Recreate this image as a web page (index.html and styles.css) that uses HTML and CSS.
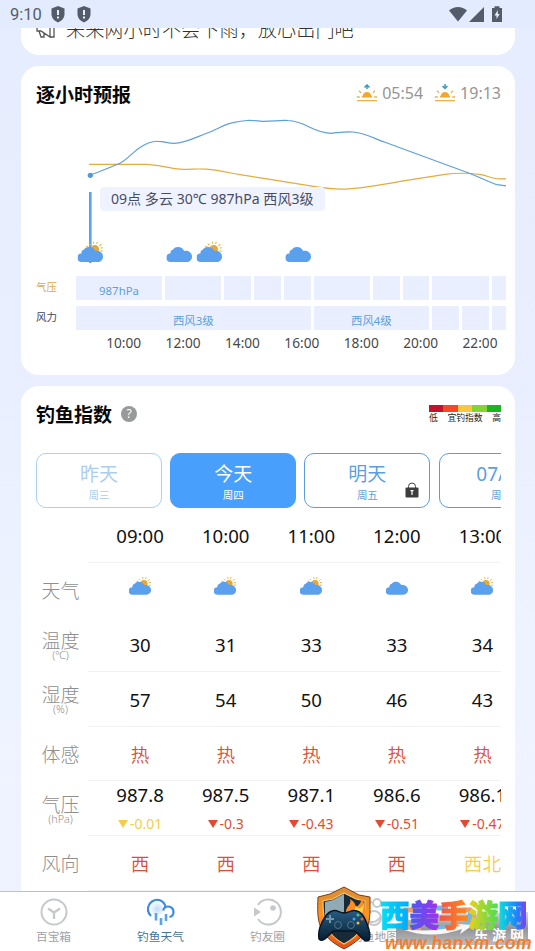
FILE: index.html
```html
<!DOCTYPE html>
<html lang="zh-CN">
<head>
<meta charset="utf-8">
<title>钓鱼天气</title>
<link rel="stylesheet" href="styles.css">
</head>
<body>
<svg class="defs" aria-hidden="true">
  <defs>
    <symbol id="cloud" viewBox="0 0 26 22"><path fill="#5ba0ec" d="M4 20.5a4.3 4.3 0 0 1-.2-8.6C4.200 9.200 4.700 8.500 6.300 8.200 7.800 5.900 9.700 5.400 11.700 5.500c2.700 0 4.800 1.600 5.900 3.900 4-.8 7.900 1.600 7.900 5.800 0 3.200-2.500 5.300-5.300 5.300z"/></symbol>
    <symbol id="partly" viewBox="0 0 26 22"><circle cx="17.300" cy="7.700" r="4.200" fill="#e7a733"/><path stroke="#eeb544" stroke-width="1.100" stroke-linecap="round" d="M16.200 1.800 15.800.3M19.200 1.900l.6-1.400M22.300 4l1.300-1M23.500 6.500l1.600-.2M23.500 9.400l1.500.3M12.600 3.500l-1-1M10.500 5.200 9 4.800"/><use href="#cloud"/></symbol>
    <symbol id="sun" viewBox="0 0 22 17"><path fill="#f4a62c" d="M6 12.500c-.5-1 .5-1.500 1-2.500a4.200 4.200 0 0 1 8 0c.5 1 1.500 1.500 1 2.500z"/><path fill="none" stroke="#efb04a" stroke-width="1.300" d="M1 15.700h20M.8 12h3M18.200 12h3M3 5.700l2 2M19 5.700l-2 2"/></symbol>
    <symbol id="shield" viewBox="0 0 14 17"><path fill="#555c69" d="m7 0 6.500 2.500V8c0 4-2.800 7-6.500 8.500C3.300 15 .5 12 .5 8V2.500z"/><path stroke="#e5edfe" stroke-width="2" d="M7 4v5M7 10.500v2"/></symbol>
  </defs>
</svg>
<div class="phone">
  <header class="status">
    <span class="clock">9:10</span>
    <svg class="shield" width="14" height="17"><use href="#shield"/></svg>
    <svg class="shield second" width="14" height="17"><use href="#shield"/></svg>
    <svg class="signals" width="54" height="17" viewBox="0 0 54 17"><g fill="#555c69"><path d="M0 4.500C5-.2 13-.2 18 4.500L9 15.500z"/><path d="M35 1v15H20z"/><path d="M43 2h2.500V.3h5V2H53v14H43z"/></g><path fill="#e5edfe" d="m48.800 4-3.300 5.500h2V13l3.200-5h-1.900z"/></svg>
  </header>

  <main class="feed">
    <section class="card notice">
      <div class="notice-line">
        <svg width="19" height="22" viewBox="0 0 19 22"><path fill="none" stroke="#555" stroke-width="1.300" d="M1 6v7h4l9 6V1L5 6zM3 13l2 6h3v-4M18 3v16h-4"/></svg>
        <span>未来两小时不会下雨，放心出门吧</span>
      </div>
    </section>

    <section class="card hourly">
      <div class="card-head">
        <h2>逐小时预报</h2>
        <div class="suntimes">
          <svg width="22" height="18" viewBox="0 0 22 18"><use href="#sun" width="22" height="17" y="1"/><path fill="none" stroke="#3d98c2" stroke-width="1.500" d="M11 5V1M8.500 3.500 11 1l2.500 2.500"/></svg>
          <span>05:54</span>
          <svg class="set" width="22" height="18" viewBox="0 0 22 18"><use href="#sun" width="22" height="17" y="1"/><path fill="none" stroke="#3d98c2" stroke-width="1.500" d="M11 0v4M8.500 2 11 4.500 13.500 2"/></svg>
          <span>19:13</span>
        </div>
      </div>
      <div class="chart">
        <svg width="430" height="155" viewBox="76 112 430 155">
          <path class="line pressure" d="M89 164.300H146C160 164.500 168 169 184 169.300C192 169.300 198 168.600 206 169.200C220 170.200 230 173 240 174.700L270 179.300L315 186.700C326 188.500 334 189.200 342 189.200C362 188.800 382 184.500 405 180.700L445 174.300C458 172.600 468 172.800 481 174.700C488 176 493 178.800 499 178.800H506.500"/>
          <path class="line temp" d="M90 175.300C98 172 112 167 120 163.300C128 159 134 151 140 147.500C147 143 153 141 158 141.300C165 141.500 168 143.500 174 143.400C186 143 196 137 206.700 133.300C216 130 225 124 233 122.700C244 120 250 120 262 121.300C272 121.500 280 120 288 120.500C306 121 312 133 331.700 133.300C340 132.500 345 131.500 353 132C366 133 375 139 385 142.300L468 172.700C480 177 490 183 497 184.700L506.500 186"/>
          <circle cx="90.300" cy="175.300" r="2.600" fill="#4f98e0"/>
          <path stroke="#5ba0ec" stroke-width="2.600" d="M90.300 192v71"/>
          <use href="#partly" x="77.500" y="241.500" width="26" height="22"/>
          <use href="#cloud" x="166.500" y="241.500" width="26" height="22"/>
          <use href="#partly" x="196.500" y="241.500" width="26" height="22"/>
          <use href="#cloud" x="285.500" y="241.500" width="26" height="22"/>
        </svg>
        <div class="tip">09点 多云 30℃ 987hPa 西风3级</div>
      </div>
      <div class="track press"><span class="name">气压</span>
        <div class="cells"><i class="s3">987hPa</i><i class="s2"></i><i></i><i></i><i></i><i class="s2"></i><i></i><i></i><i class="s2"></i><i></i></div>
      </div>
      <div class="track"><span class="name">风力</span>
        <div class="cells"><i class="s8">西风3级</i><i class="s4">西风4级</i><i></i><i></i><i></i></div>
      </div>
      <div class="hours"><span>10:00</span><span>12:00</span><span>14:00</span><span>16:00</span><span>18:00</span><span>20:00</span><span>22:00</span></div>
    </section>

    <section class="card index">
      <div class="card-head">
        <h2>钓鱼指数</h2><span class="help">?</span>
        <div class="legend">
          <div class="scale"><b class="r"></b><b class="o"></b><b class="y"></b><b class="l"></b><b class="g"></b></div>
          <div class="words"><span>低</span><span>宜钓指数</span><span>高</span></div>
        </div>
      </div>
      <div class="days">
        <div class="day past"><span>昨天</span><small>周三</small></div>
        <div class="day active"><span>今天</span><small>周四</small></div>
        <div class="day"><span>明天</span><small>周五</small>
          <svg class="lock" width="14" height="16" viewBox="0 0 14 16"><path fill="none" stroke="#444" d="M3.500 6V4.500a3.500 3.500 0 0 1 7 0V6"/><rect x=".5" y="5.500" width="13" height="10" rx="1" fill="#3d3d3d"/><path stroke="#fff" stroke-width="1.200" d="M7 8v5M5.500 8.700h3"/></svg>
        </div>
        <div class="day"><span>07/11</span><small>周六</small></div>
      </div>
      <div class="table">
        <div class="labels">
          <div></div><div>天气</div><div>温度<small>(℃)</small></div><div>湿度<small>(%)</small></div><div>体感</div><div>气压<small>(hPa)</small></div><div>风向</div>
        </div>
        <div class="rows">
          <div class="row"><span>09:00</span><span>10:00</span><span>11:00</span><span>12:00</span><span>13:00</span></div>
          <div class="row icons"><svg><use href="#partly"/></svg><svg><use href="#partly"/></svg><svg><use href="#partly"/></svg><svg><use href="#cloud"/></svg><svg><use href="#partly"/></svg></div>
          <div class="row"><span>30</span><span>31</span><span>33</span><span>33</span><span>34</span></div>
          <div class="row"><span>57</span><span>54</span><span>50</span><span>46</span><span>43</span></div>
          <div class="row red"><span>热</span><span>热</span><span>热</span><span>热</span><span>热</span></div>
          <div class="row hpa">
            <span>987.8<em class="yellow">-0.01</em></span><span>987.5<em>-0.3</em></span><span>987.1<em>-0.43</em></span><span>986.6<em>-0.51</em></span><span>986.1<em>-0.47</em></span>
          </div>
          <div class="row red"><span>西</span><span>西</span><span>西</span><span>西</span><span class="yellow">西北</span></div>
        </div>
      </div>
    </section>
  </main>

  <nav class="tabs">
    <div class="tab"><svg width="28" height="28" viewBox="0 0 28 28"><g fill="none" stroke="#c5c8cc" stroke-width="2"><circle cx="14" cy="14" r="12.500"/><path stroke-width="2.400" d="m8 10.500 6 4 6-4M14 14v7"/></g></svg>百宝箱</div>
    <div class="tab on"><svg width="28" height="28" viewBox="0 0 28 28"><defs><radialGradient id="glow"><stop offset="0" stop-color="#bfdbfa"/><stop offset="1" stop-color="#f6faff"/></radialGradient></defs><circle cx="10.500" cy="11" r="7" fill="url(#glow)"/><g fill="none" stroke="#3a8ddd" stroke-width="2.200"><path d="M4 18C-.5 14 0 7 5 3.500c5-3.500 12-1.500 13.500 5.500 4-1.500 8 .8 8 5 0 2.500-1.500 4.500-4 5M18.500 9c-1.300.7-2 2-2.300 3.500"/><path stroke-width="2.600" stroke="#5aa3e9" d="M9 15v7.500M14 20v7M19 16v7"/></g></svg>钓鱼天气</div>
    <div class="tab"><svg width="28" height="28" viewBox="0 0 28 28"><path fill="none" stroke="#c5c8cc" stroke-width="2" d="M4 7a12.500 12.500 0 1 1 0 14"/><path fill="#c5c8cc" d="m0 9.500 7 4.500-7 4.500z"/><circle cx="19" cy="10" r="2.800" fill="#c5c8cc"/></svg>钓友圈</div>
    <div class="tab"><svg width="28" height="28" viewBox="0 0 28 28"><g fill="none" stroke="#c5c8cc" stroke-width="2"><path d="M11 4a10 10 0 1 0 9 14"/><circle cx="16" cy="5" r="4"/><circle cx="13" cy="20" r="7"/></g></svg>钓鱼地图</div>
    <div class="tab"></div>
  </nav>

  <div class="brand">
    <svg class="plate" width="138" height="46" viewBox="0 0 138 46"><defs><linearGradient id="steel" x2="0" y2="1"><stop stop-color="#d6d6d8"/><stop offset=".5" stop-color="#929497"/><stop offset="1" stop-color="#bbbcbe"/></linearGradient></defs><path fill="url(#steel)" d="M5 24q35-12 63-10L137 12v33H5z"/><g fill="none" stroke-width="5"><path stroke="#ef9c67" d="M29 10H15v18h15M65 10h14q8 9-3 16H65"/><path stroke="#70b9e5" d="M57 8H42v20h18M81 10l-7 18"/></g><path fill="#f8f8f8" d="M11 29q28 11 60 0l-2 5 13-9-15-1 2 2Q39 33 11 29"/></svg>
    <svg class="crest" width="58" height="64" viewBox="0 0 58 64"><defs><linearGradient id="fire" x2="0" y2="1"><stop stop-color="#d58e37"/><stop offset=".45" stop-color="#ff941e"/><stop offset="1" stop-color="#e44e12"/></linearGradient><linearGradient id="pad" x2="0" y2="1"><stop stop-color="#275c82"/><stop offset="1" stop-color="#071d30"/></linearGradient></defs><path fill="url(#fire)" stroke="#793a1d" d="M29 1 44 9l11 2c0 25 2 37-26 52C2 49 2 35 3 11l12-3z"/><path fill="#172a39" stroke="#ffc16a" stroke-width="1.200" d="m29 7 12 6 9 2c0 24-2 33-21 43C10 48 8 34 8 15l10-2z"/><path fill="#91abb5" d="m29 8-11 6-8 2v18l19-8z"/><path fill="#ff8b20" d="M31 26c0-6 6-7 4-13 5 3 6 6 5 9 5-3 7-7 6-11 5 6 3 13 5 20L48 44z"/><path fill="#ffd34b" d="M36 29c4-3 3-6 5-10 2 6 5 3 8-1l-3 16z"/><path fill="url(#pad)" stroke="#091521" stroke-width="1.500" d="M17 25c5-2 7 2 12 2s8-4 13-2c8 1 15 24 12 29-5 4-10-7-15-9H19C14 47 9 58 4 53 2 43 10 27 17 25"/><path stroke="#7295a7" stroke-width="2" d="M15 29v8M11 33h8"/><g fill="none" stroke="#52758a"><circle cx="23" cy="39" r="3.500"/><circle cx="36" cy="39" r="3.500"/></g><circle cx="43" cy="29" r="1.500" fill="#61be7b"/><circle cx="39" cy="33" r="1.500" fill="#3fa6ed"/><circle cx="47" cy="33" r="1.500" fill="#ef5d44"/><circle cx="43" cy="37" r="1.500" fill="#f1bc3a"/></svg>
    <span class="brand-sub">乐游网</span>
    <span class="brand-name"><b class="c1">西</b><b class="c2">美</b><b class="c3">手</b><b class="c4">游</b><b class="c5">网</b></span>
    <span class="brand-url">www.hanxm.com</span>
  </div>
</div>
</body>
</html>
```
FILE: styles.css
```css
* { box-sizing: border-box; }
body { margin: 0; font-family: "Noto Sans", "Noto Sans CJK SC", sans-serif; color: #111; }
svg { display: block; flex: none; }
.defs { position: absolute; width: 0; height: 0; }
.phone { position: relative; width: 535px; height: 951px; overflow: hidden; display: flex; flex-direction: column; background: linear-gradient(#e4edff, #e8edfe 12%, #e9effe 40%, #eef4ff 75%, #f0f1ff); }

.status { height: 28px; flex: none; display: flex; align-items: center; padding: 1px 32px 0 10px; background: #e3ecff; }
.clock { width: 41px; font: 16.5px/20px Roboto, sans-serif; color: #555c69; }
.shield.second { margin-left: 12px; }
.signals { margin-left: auto; }

.feed { flex: 1; min-height: 0; overflow: hidden; display: flex; flex-direction: column; gap: 11px; padding: 0 20px 0 21px; }
.card { flex: none; background: #fff; border-radius: 18px; padding: 0 14px 0 15px; }
.notice { height: 27px; border-radius: 0 0 18px 18px; overflow: hidden; }
.notice-line { display: flex; align-items: center; gap: 11px; height: 28px; margin-top: -13px; font-size: 19.2px; font-weight: 300; color: #333; white-space: nowrap; }

.card-head { display: flex; align-items: center; height: 56px; }
h2 { margin: 0; font: bold 19px/28px "Noto Sans CJK SC", sans-serif; color: #080808; }
.suntimes { margin-left: auto; display: flex; align-items: center; gap: 4px; height: 28px; margin-top: -3px; color: #959595; font-size: 16px; }
.suntimes .set { margin-left: 7px; }

.hourly { height: 309px; }
.chart { position: relative; height: 155px; margin: -10px 0 0 40px; }
.line { fill: none; stroke-width: 1.2; }
.line.temp { stroke: #5d9fdc; }
.line.pressure { stroke: #e5ab3e; }
.tip { position: absolute; left: 24px; top: 75px; width: 225px; height: 24px; border-radius: 4px; padding-left: 11px; background: #eff3ff; color: #494d63; font-size: 14.08px; line-height: 24px; white-space: nowrap; }
.track { display: flex; height: 24px; margin: 0 0 6px; }
.track.press { margin-top: 9px; }
.name { flex: none; width: 40px; font-size: 10.5px; line-height: 23px; color: #3f4659; }
.press .name { color: #dfac3e; }
.cells { flex: none; display: grid; grid-template-columns: repeat(14, 26.7px) 14px; column-gap: 3px; }
.cells i { font-style: normal; background: #e9effe; color: #5ba0dd; font-size: 11.4px; line-height: 30px; height: 24px; text-align: center; }
.cells .s2 { grid-column: span 2; }
.cells .s3 { grid-column: span 3; }
.cells .s4 { grid-column: span 4; }
.cells .s8 { grid-column: span 8; }
.hours { display: grid; grid-template-columns: repeat(7, 59.4px); margin: -3px 0 0 58px; font-size: 13.7px; line-height: 20px; color: #484848; text-align: center; }

.index { height: 560px; }
.help { width: 16px; height: 16px; margin-left: 9px; border-radius: 50%; background: #999; color: #fff; font-size: 12px; line-height: 16px; text-align: center; }
.legend { width: 72px; margin-left: auto; }
.scale { display: flex; height: 7px; margin-top: 1px; }
.scale b { flex: 1; }
.scale .r { background: #c9102a; }
.scale .o { background: #f54723; }
.scale .y { background: #fac642; }
.scale .l { background: #83d333; }
.scale .g { background: #18b61f; }
.words { display: flex; justify-content: space-between; font-size: 8.8px; line-height: 12px; white-space: nowrap; color: #222; }
.days { display: flex; gap: 8.2px; height: 55px; margin-top: 11px; overflow: hidden; }
.day { position: relative; flex: none; width: 126px; height: 55px; border: 1.3px solid #5b9cdc; border-radius: 10px; display: flex; flex-direction: column; align-items: center; padding-top: 7px; color: #5b9fde; font-size: 19px; line-height: 26px; }
.day small { font-size: 10.5px; line-height: 16px; }
.day.past { color: #accdec; border-color: #acd0f0; }
.day.active { background: #489ffc; border-color: #489ffc; color: #fff; }
.lock { position: absolute; right: 10px; bottom: 9px; }

.table { display: flex; overflow: hidden; }
.labels { width: 52px; flex: none; color: #8e8e8e; font-size: 19px; font-weight: 300; }
.labels div { height: 54.7px; display: flex; flex-direction: column; align-items: center; justify-content: center; width: 49px; line-height: 22px; padding-top: 1px; }
.labels small { font-size: 10.8px; line-height: 12px; margin-top: -3px; }
.rows { flex: none; width: 437px; }
.row { height: 54.7px; border-bottom: 1px solid #f2f2f4; display: grid; grid-template-columns: repeat(5, 85.6px); padding-left: 9.3px; align-items: center; justify-items: center; font-size: 18.6px; line-height: 26px; padding-top: 2px; }
.icons { border-color: transparent; }
.icons svg { width: 22.5px; height: 19px; margin-top: -9px; }
.red { color: #d95037; font-weight: 350; }
.row .yellow { color: #f4cd4b; }
.hpa { padding-top: 1px; }
.hpa span { display: flex; flex-direction: column; align-items: center; }
.hpa em { font-style: normal; font-size: 14px; line-height: 26px; color: #e34b31; display: flex; align-items: center; gap: 2px; margin-top: 3px; }
.hpa em::before { content: ""; border: 5.5px solid transparent; border-top: 8px solid currentColor; border-bottom: 0; }

.tabs { height: 60px; flex: none; display: flex; background: #fff; border-top: 1px solid #bfc1c5; }
.tab { width: 107px; display: flex; flex-direction: column; align-items: center; padding-top: 6px; color: #a0a2a5; font-size: 11.7px; line-height: 21px; }
.tab.on { color: #47729d; }

.brand { position: absolute; left: 315px; top: 886px; width: 220px; height: 65px; white-space: nowrap; }
.plate { position: absolute; left: 76px; top: 14px; }
.crest { position: absolute; left: 0; top: 0; }
.brand-name { position: absolute; left: 65px; top: 9px; display: flex; font: 900 29.5px/36px "Noto Sans CJK SC", sans-serif; }
.brand-name b { color: transparent; background-clip: text; -webkit-background-clip: text; -webkit-text-stroke: 1px transparent; }
.brand-name .c1 { background-image: linear-gradient(90deg, #08e0f2, #00a7ff); }
.brand-name .c2 { background-image: linear-gradient(90deg, #465cf1, #a62ee8); }
.brand-name .c3 { background-image: linear-gradient(90deg, #ef554b, #ff8b16); }
.brand-name .c4 { background-image: linear-gradient(90deg, #ecd016, #49de55); }
.brand-name .c5 { background-image: linear-gradient(90deg, #0ee3d8, #1789ff 60%, #9330ee); }
.brand-sub { position: absolute; left: 159px; top: 40px; color: #fff; font: bold 14px/16px "Noto Sans CJK SC", sans-serif; letter-spacing: 4px; }
.brand-url { position: absolute; left: 70px; top: 49px; color: #f47f2f; font: italic bold 17.6px/16px "Liberation Sans", sans-serif; letter-spacing: .3px; }
```
